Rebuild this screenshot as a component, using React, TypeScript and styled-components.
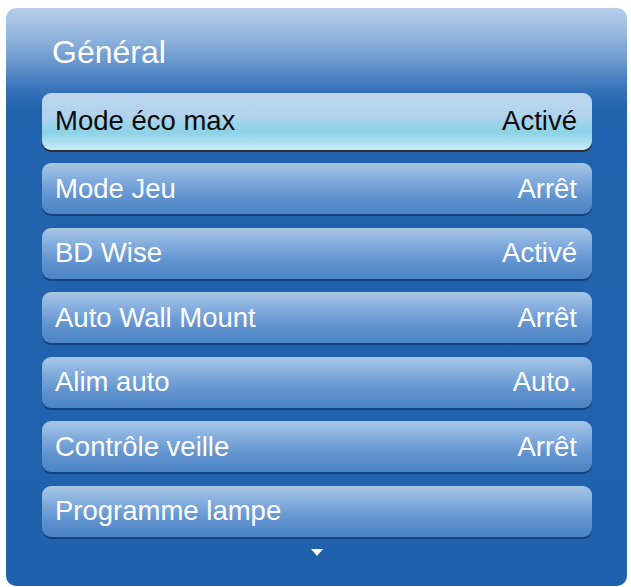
import React from "react";
import styled, { createGlobalStyle } from "styled-components";

const Global = createGlobalStyle`
  html, body { margin: 0; padding: 0; background: #ffffff; }
  body { font-family: "Liberation Sans", Arial, sans-serif; }
`;

const Page = styled.div`
  width: 631px;
  height: 587px;
  padding: 8px 4px 1px 6px;
  box-sizing: border-box;
`;

const Panel = styled.div`
  width: 621px;
  height: 578px;
  box-sizing: border-box;
  border-radius: 10px;
  padding: 27px 35px 0 36px;
  background: linear-gradient(
    180deg,
    #b6cfea 0px,
    #94b7df 28px,
    #6796ce 55px,
    #3a74ba 80px,
    #2263ae 100px,
    #1f61ad 100%
  );
  display: flex;
  flex-direction: column;
`;

const Title = styled.div`
  color: #ffffff;
  font-size: 32px;
  line-height: 34px;
  height: 34px;
  padding-left: 10px;
  margin-bottom: 24px;
`;

const List = styled.div`
  display: flex;
  flex-direction: column;
  gap: 13.5px;
`;

const Row = styled.div<{ $active?: boolean }>`
  flex: none;
  height: ${(p) => (p.$active ? 56.5 : 51)}px;
  box-sizing: border-box;
  border-radius: 9px;
  display: flex;
  align-items: center;
  justify-content: space-between;
  padding: 0 15px 0 13px;
  font-size: 27.5px;
  color: ${(p) => (p.$active ? "#0c0c0c" : "#ffffff")};
  background: ${(p) =>
    p.$active
      ? "linear-gradient(180deg, #bcd6ee 0%, #afd2ec 45%, #98d3e9 56%, #8ed2e7 70%, #b3e2f1 90%, #cdeef7 100%)"
      : "linear-gradient(180deg, #a8c7e6 0%, #86aedf 30%, #6194cf 65%, #4b83c4 100%)"};
  box-shadow: ${(p) =>
    p.$active ? "0 2px 0 #2e2e2e" : "0 2px 0 #173f7a"};
`;

const Label = styled.span``;
const Value = styled.span``;

const ArrowBox = styled.div`
  display: flex;
  justify-content: center;
  margin-top: 12px;
`;

const items: { label: string; value?: string; active?: boolean }[] = [
  { label: "Mode éco max", value: "Activé", active: true },
  { label: "Mode Jeu", value: "Arrêt" },
  { label: "BD Wise", value: "Activé" },
  { label: "Auto Wall Mount", value: "Arrêt" },
  { label: "Alim auto", value: "Auto." },
  { label: "Contrôle veille", value: "Arrêt" },
  { label: "Programme lampe" },
];

export default function App() {
  return (
    <>
      <Global />
      <Page>
        <Panel>
          <Title>Général</Title>
          <List>
            {items.map((it) => (
              <Row key={it.label} $active={it.active}>
                <Label>{it.label}</Label>
                {it.value && <Value>{it.value}</Value>}
              </Row>
            ))}
          </List>
          <ArrowBox>
            <svg width="12" height="7" viewBox="0 0 12 7">
              <polygon points="0,0 12,0 6,7" fill="#ffffff" />
            </svg>
          </ArrowBox>
        </Panel>
      </Page>
    </>
  );
}
